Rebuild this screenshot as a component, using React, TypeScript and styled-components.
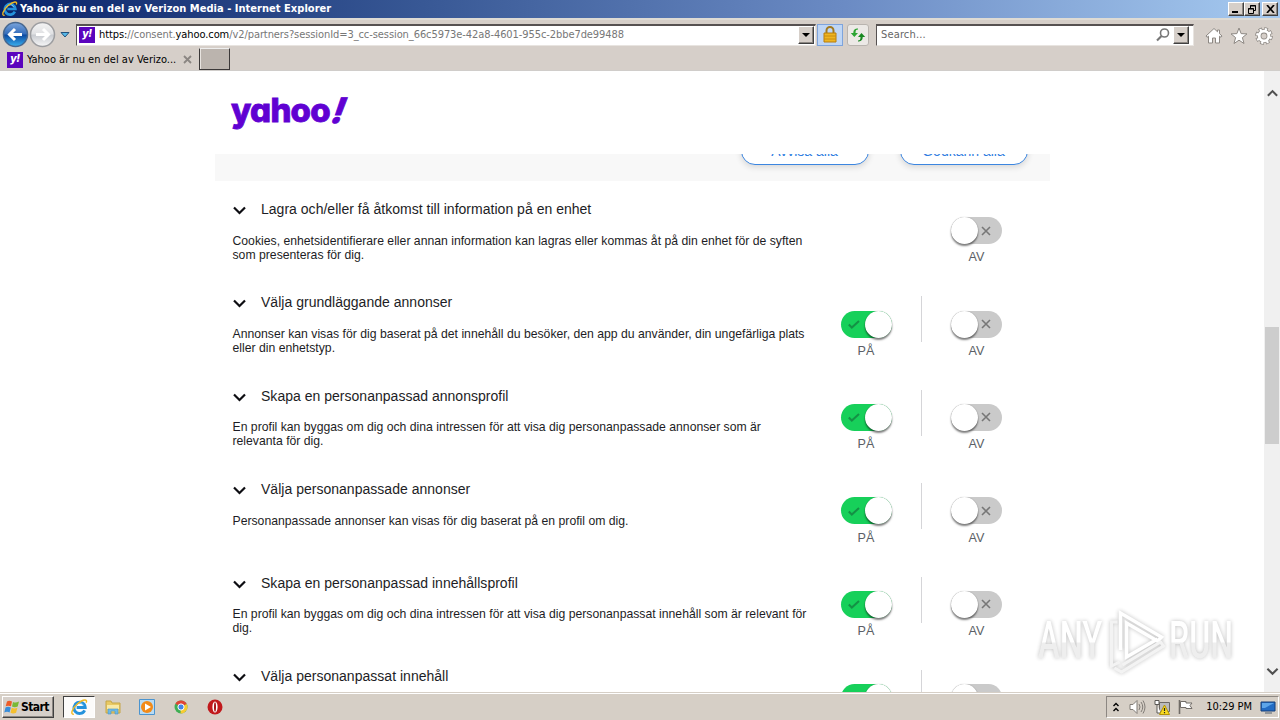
import React from "react";
import styled, { createGlobalStyle, css } from "styled-components";

const GlobalStyle = createGlobalStyle`
    * {
        box-sizing: border-box;
    }

    body {
        margin: 0;
        overflow: hidden;
        font-family: "Liberation Sans", Arial, sans-serif;
        background: #fff;
    }

    svg {
        display: block;
        flex: none;
    }
`;

const raised = css`
    background: #d6cfc9;
    border: 1px solid;
    border-color: #fff #404040 #404040 #fff;
    box-shadow: inset -1px -1px 0 #8c8782;
`;

const Desktop = styled.div`
    display: flex;
    flex-direction: column;
    width: 1280px;
    height: 720px;
    overflow: hidden;
`;

const TitleBar = styled.div`
    display: flex;
    align-items: center;
    height: 18px;
    padding: 0 2px;
    background: linear-gradient(90deg, #0a246a 0%, #385895 33%, #6b8bc4 66%, #a6caf0 100%);
`;

const UiText = styled.span<{ $size?: number; $spacing?: number; $bold?: boolean; $color?: string }>`
    font-family: "DejaVu Sans Condensed", "DejaVu Sans", sans-serif;
    font-stretch: condensed;
    font-size: ${(p) => p.$size || 11}px;
    font-weight: ${(p) => (p.$bold ? 700 : 400)};
    letter-spacing: ${(p) => p.$spacing || 0}px;
    color: ${(p) => p.$color || "#000"};
    line-height: 14px;
    white-space: nowrap;
`;

const TitleText = styled(UiText)`
    flex: 1;
    margin-left: 2px;
`;

const WindowButton = styled.div<{ $gap?: boolean }>`
    ${raised}
    display: flex;
    align-items: center;
    justify-content: center;
    width: 16px;
    height: 14px;
    margin-left: ${(p) => (p.$gap ? 2 : 0)}px;
`;

const AddressBar = styled.div`
    display: flex;
    align-items: center;
    height: 31px;
    padding: 0 0 0 2px;
    background: #d6cfc9;
    border-top: 2px solid #dedbd4;
`;

const Field = styled.div<{ $width: number }>`
    display: flex;
    align-items: center;
    flex: none;
    width: ${(p) => p.$width}px;
    height: 22px;
    padding: 0 1px 0 2px;
    background: #fff;
    border: 1px solid;
    border-color: #565151 #e8e4e0 #e8e4e0 #565151;
    border-top-width: 2px;
`;

const FieldText = styled(UiText)<{ $left?: number }>`
    flex: 1;
    margin-left: ${(p) => p.$left ?? 4}px;
`;

const DropButton = styled.div`
    ${raised}
    display: flex;
    align-items: center;
    justify-content: center;
    width: 16px;
    height: 18px;
`;

const ToolButton = styled.div<{ $active?: boolean; $left: number }>`
    display: flex;
    align-items: center;
    justify-content: center;
    width: ${(p) => (p.$active ? 26 : 22)}px;
    height: 22px;
    margin-left: ${(p) => p.$left}px;
    background: ${(p) => (p.$active ? "#bfd6f5" : "#ece9e6")};
    border: 1px solid ${(p) => (p.$active ? "#7ea4dc" : "#b9b4af")};
    border-radius: ${(p) => (p.$active ? 0 : 3)}px;
`;

const Commands = styled.div`
    display: flex;
    gap: 7px;
    margin: 2px 0 0 11px;
`;

const TabBar = styled.div`
    display: flex;
    height: 22px;
    background: #d6cfc9;
    border-bottom: 1px solid #d0cdca;
`;

const Tab = styled.div`
    display: flex;
    align-items: center;
    width: 199px;
    padding: 0 7px;
`;

const TabText = styled(UiText)`
    flex: 1;
    margin-left: 4px;
`;

const NewTab = styled.div`
    width: 31px;
    height: 22px;
    margin-top: -1px;
    background: #bbb4ae;
    border: 1px solid;
    border-color: #eee #3b3838 #3b3838 #3b3838;
    box-shadow: inset 1px 0 0 #e8e4e0;
`;

const Favicon = styled.div`
    display: flex;
    justify-content: center;
    flex: none;
    width: 16px;
    height: 16px;
    background: #5b04bd;
    color: #fff;
    font: italic 800 10.5px/14px "Inter", sans-serif;
    letter-spacing: -0.3px;
`;

const Viewport = styled.div`
    display: flex;
    height: 621px;
    overflow: hidden;
`;

const Page = styled.div`
    width: 1264px;
    height: 621px;
    overflow: hidden;
`;

const PageHeader = styled.header`
    display: flex;
    height: 83px;
    padding: 19px 0 0 231px;
`;

const Logo = styled.div`
    display: flex;
    font-family: "Inter", sans-serif;
    font-weight: 800;
    font-size: 33px;
    line-height: 40px;
    letter-spacing: -0.75px;
    font-feature-settings: "cv11";
    color: #6001d2;
    -webkit-text-stroke: 0.8px #6001d2;
`;

const LogoMark = styled.span`
    margin-left: -1px;
    font-size: 35px;
    font-weight: 800;
    transform: skewX(-20deg);
`;

const Scroller = styled.main`
    width: 835px;
    height: 538px;
    margin-left: 215px;
    overflow: hidden;
`;

const ActionBand = styled.div`
    display: flex;
    justify-content: flex-end;
    gap: 31px;
    height: 70px;
    margin-top: -43px;
    padding: 26px 22px 0 0;
    background: #f8f8f8;
`;

const PillButton = styled.button`
    width: 128px;
    height: 28px;
    padding: 0 1px 1px 0;
    font: 14px/16px "Liberation Sans", Arial, sans-serif;
    color: #2f7de1;
    background: #fff;
    border: 1px solid #3c86e0;
    border-radius: 14px;
    box-shadow: 0 2px 6px rgba(0, 0, 0, 0.14);
`;

const PurposeRow = styled.section`
    display: grid;
    grid-template-columns: 579px 110px 111px;
    height: 93.4px;
    padding-left: 17px;
`;

const PurposeText = styled.div`
    padding-top: 19px;
`;

const PurposeTitle = styled.h3`
    display: flex;
    align-items: center;
    gap: 14px;
    margin: 0;
    font-size: 14px;
    font-weight: 400;
    letter-spacing: 0.02px;
    line-height: 18px;
    color: #1d1d25;
    white-space: nowrap;

    svg {
        margin-top: 2px;
    }
`;

const PurposeDescription = styled.p`
    width: 582px;
    margin: 15.6px 0 0 0.5px;
    font-size: 12.22px;
    line-height: 14px;
    color: #1d1d25;
    white-space: pre;
`;

const ToggleCell = styled.div<{ $divided?: boolean }>`
    display: flex;
    flex-direction: column;
    align-items: center;
    height: 46px;
    margin-top: 22px;
    padding: 14.2px 1px 0 0;
    border-left: 1px solid ${(p) => (p.$divided ? "#d5d5d8" : "transparent")};
`;

const ToggleTrack = styled.div<{ $on: boolean }>`
    display: flex;
    flex: none;
    align-items: center;
    flex-direction: ${(p) => (p.$on ? "row-reverse" : "row")};
    width: 51px;
    height: 27px;
    background: ${(p) => (p.$on ? "#17d05a" : "#cacaca")};
    border-radius: 14px;
`;

const Knob = styled.div`
    width: 27px;
    height: 27px;
    background: #fff;
    border-radius: 50%;
    box-shadow: 0 2px 2px rgba(0, 0, 0, 0.5), 0 0 1px rgba(0, 0, 0, 0.3);
`;

const ToggleSymbol = styled.div<{ $on: boolean }>`
    display: flex;
    flex: 1;
    justify-content: ${(p) => (p.$on ? "center" : "flex-start")};
    padding-left: 2px;
`;

const ToggleLabel = styled.span`
    margin-top: 5.3px;
    font-size: 12.6px;
    line-height: 16px;
    color: #5b5f66;
`;

const ScrollBar = styled.div`
    display: flex;
    flex-direction: column;
    align-items: center;
    width: 16px;
    padding: 17px 0 16px;
    background: #f0f0f0;
`;

const ScrollThumb = styled.div`
    width: 14px;
    height: 117px;
    margin: 229px 0 auto;
    background: #cdcdcd;
`;

const Taskbar = styled.div`
    display: flex;
    align-items: center;
    height: 28px;
    padding: 2px 1px 1px 2px;
    background: #d6cfc6;
    border-top: 1px solid #d6cfc6;
    box-shadow: inset 0 1px 0 #fff;
`;

const StartButton = styled.div`
    ${raised}
    display: flex;
    align-items: center;
    gap: 1px;
    width: 52px;
    height: 22px;
    padding-left: 1px;
`;

const ActiveTask = styled.div`
    display: flex;
    align-items: center;
    justify-content: center;
    width: 32px;
    height: 22px;
    margin-left: 9px;
    background: #fcfbfa;
    border: 1px solid;
    border-color: #404040 #fff #fff #404040;
`;

const QuickLaunch = styled.div`
    display: flex;
    flex: 1;
    gap: 18px;
    padding-left: 10px;
`;

const Tray = styled.div`
    display: flex;
    align-items: center;
    width: 173px;
    height: 22px;
    padding-left: 5px;
    border: 1px solid;
    border-color: #8c8782 #fff #fff #8c8782;
`;

const TrayIcons = styled.div`
    display: flex;
    flex: 1;
    align-items: center;
    gap: 8px;
`;

const Watermark = styled.div`
    position: absolute;
    left: 1038px;
    top: 606px;
    display: flex;
    align-items: center;
    width: 196px;
    height: 70px;
    opacity: 0.85;
    filter: drop-shadow(0 0 2px rgba(0, 0, 0, 0.3));
`;

const WatermarkSlot = styled.div<{ $width: number }>`
    flex: none;
    width: ${(p) => p.$width}px;
`;

const WatermarkWord = styled.span<{ $scale: number }>`
    display: inline-block;
    font: 500 51px/60px "Roboto", Arial, sans-serif;
    color: transparent;
    background: linear-gradient(#fff 52%, #ececec 53%);
    background-clip: text;
    transform: scaleX(${(p) => p.$scale});
    transform-origin: 0 50%;
`;

const IeIcon = ({ size }: { size: number }) => (
    <svg width={size} height={size} viewBox="0 0 18 18" fill="none">
        <path d="M14.5 12a6 6 0 1 1 .6-3H6" stroke="#2492dc" strokeWidth="3" />
        <path d="M5 8c1-5 7-5 8-1" stroke="#8ad3fa" strokeWidth="1" />
        <path d="M3 16C-1 17 1 10 7 5s11-5 9-1" stroke="#f0b922" strokeWidth="1.5" />
    </svg>
);

const NavArrow = ({ back }: { back?: boolean }) => (
    <svg width="27" height="27" viewBox="0 0 27 27">
        <defs>
            <linearGradient id={back ? "navBack" : "navForward"} x2="0" y2="1">
                <stop stopColor={back ? "#7ba5dc" : "#f4f4f4"} />
                <stop offset=".48" stopColor={back ? "#356dbb" : "#e0e1e3"} />
                <stop offset=".52" stopColor={back ? "#0b49a1" : "#c8cbd0"} />
                <stop offset="1" stopColor={back ? "#3bb3f1" : "#f8f8f8"} />
            </linearGradient>
        </defs>
        <circle cx="13.5" cy="13.5" r="12" fill={`url(#${back ? "navBack" : "navForward"})`} stroke={back ? "#47678f" : "#9c9da0"} strokeWidth="1.5" />
        <path
            d={back ? "M20 13.5H8M13 8l-5.5 5.5L13 19" : "M7 13.5h12M14 8l5.5 5.5L14 19"}
            fill="none"
            stroke="#fff"
            strokeWidth="3"
        />
    </svg>
);

const DownTriangle = () => (
    <svg width="8" height="4" viewBox="0 0 8 4">
        <path d="M0 0h8L4 4z" fill="#000" />
    </svg>
);

const Chevron = ({ up, color = "#0d0d12", width = 14 }: { up?: boolean; color?: string; width?: number }) => (
    <svg width={width} height="10" viewBox="0 0 14 10">
        <path d={up ? "M2 8l5-5 5 5" : "M1.5 2.5L7 8l5.5-5.5"} fill="none" stroke={color} strokeWidth="2.2" />
    </svg>
);

const Toggle = ({ on }: { on: boolean }) => (
    <>
        <ToggleTrack $on={on}>
            <Knob />
            <ToggleSymbol $on={on}>
                <svg width="12" height="12" viewBox="0 0 12 12" fill="none" strokeWidth="1.6">
                    {on ? <path d="M.8 6.5l3 3L11 3" stroke="#149145" strokeWidth="2" /> : <path d="M2 2l8 8M10 2l-8 8" stroke="#777" />}
                </svg>
            </ToggleSymbol>
        </ToggleTrack>
        <ToggleLabel>{on ? "PÅ" : "AV"}</ToggleLabel>
    </>
);

const purposes = [
    {
        title: "Lagra och/eller få åtkomst till information på en enhet",
        text: "Cookies, enhetsidentifierare eller annan information kan lagras eller kommas åt på din enhet för de syften\nsom presenteras för dig.",
        single: true,
    },
    {
        title: "Välja grundläggande annonser",
        text: "Annonser kan visas för dig baserat på det innehåll du besöker, den app du använder, din ungefärliga plats\neller din enhetstyp.",
    },
    {
        title: "Skapa en personanpassad annonsprofil",
        text: "En profil kan byggas om dig och dina intressen för att visa dig personanpassade annonser som är\nrelevanta för dig.",
    },
    {
        title: "Välja personanpassade annonser",
        text: "Personanpassade annonser kan visas för dig baserat på en profil om dig.",
    },
    {
        title: "Skapa en personanpassad innehållsprofil",
        text: "En profil kan byggas om dig och dina intressen för att visa dig personanpassat innehåll som är relevant för\ndig.",
    },
];

const App = () => {
    return (
        <Desktop>
            <GlobalStyle />
            <TitleBar>
                <IeIcon size={16} />
                <TitleText $bold $color="#fff" $spacing={0.03}>Yahoo är nu en del av Verizon Media - Internet Explorer</TitleText>
                <WindowButton>
                    <svg width="10" height="9"><path d="M1 7h6" stroke="#000" strokeWidth="2" /></svg>
                </WindowButton>
                <WindowButton>
                    <svg width="10" height="9" fill="none" stroke="#000">
                        <path d="M3.5 3V.5h5v5H7M3 1h6M1 4h6" />
                        <path d="M1.5 3.5h5v5h-5z" />
                    </svg>
                </WindowButton>
                <WindowButton $gap>
                    <svg width="9" height="8"><path d="M1 0l7 8M8 0L1 8" stroke="#000" strokeWidth="1.7" /></svg>
                </WindowButton>
            </TitleBar>
            <AddressBar>
                <NavArrow back />
                <NavArrow />
                <svg width="20" height="8" viewBox="0 0 20 8">
                    <path d="M5 1.5h8L9 6z" fill="#55b8e8" stroke="#24527c" />
                </svg>
                <Field $width={740}>
                    <Favicon>y!</Favicon>
                    <FieldText $color="#777" $spacing={-0.08}>
                        <UiText $spacing={-0.08}>https:</UiText>//consent.<UiText $spacing={-0.08}>yahoo.com</UiText>
                        /v2/partners?sessionId=3_cc-session_66c5973e-42a8-4601-955c-2bbe7de99488
                    </FieldText>
                    <DropButton><DownTriangle /></DropButton>
                </Field>
                <ToolButton $active $left={1}>
                    <svg width="14" height="17" viewBox="0 0 14 17">
                        <path d="M3.5 8V4.5a3.5 3.5 0 0 1 7 0V8" fill="none" stroke="#a27a20" strokeWidth="2" />
                        <path d="M1 7h12v9H1z" fill="#efb51f" stroke="#b77c0c" />
                        <path d="M1 10h12M1 13h12" stroke="#c88c13" />
                    </svg>
                </ToolButton>
                <ToolButton $left={4}>
                    <svg width="16" height="16" viewBox="0 0 16 16">
                        <path d="M8 2.5C6 2.5 5.5 3.5 5.5 6H8L4.300 10 .8 6h2.500C3.500 2.500 5 1.500 8 1.500z" fill="#2da433" />
                        <path d="M8 14.500c2.500 0 4.700-1 4.700-4.500h2.500L11.500 6 8 10h2.500c0 2.500-.5 3.500-2.500 3.500z" fill="#178820" />
                    </svg>
                </ToolButton>
                <svg width="7" height="10" />
                <Field $width={318}>
                    <FieldText $color="#666" $spacing={0.15} $left={2}>Search...</FieldText>
                    <svg width="17" height="16" viewBox="0 0 17 16" fill="none" stroke="#777">
                        <circle cx="8.500" cy="6" r="4" strokeWidth="1.6" />
                        <path d="M5.500 9L1 13.500" strokeWidth="2.2" />
                    </svg>
                    <DropButton><DownTriangle /></DropButton>
                    <svg width="3" height="10" />
                </Field>
                <Commands>
                    <svg width="18" height="18" viewBox="0 0 18 18" fill="#fff" stroke="#8d8883">
                        <path d="M9 1.500L1 9l1 1.300 1.500-1.100V16h4v-5h3v5h4V9.200l1.500 1.100L17 9l-2.500-2.300V3h-2v1.800z" />
                    </svg>
                    <svg width="18" height="18" viewBox="0 0 18 18" fill="#fff" stroke="#8d8883">
                        <path d="M9 1l2.100 5.600 5.900.3-4.600 3.700L14 16.500l-5-3.300-5 3.300 1.600-5.900L1 6.900l5.900-.3z" />
                    </svg>
                    <svg width="18" height="18" viewBox="0 0 18 18" fill="none">
                        <circle cx="9" cy="9" r="7" stroke="#8d8883" strokeWidth="3.6" strokeDasharray="3.500 2" />
                        <circle cx="9" cy="9" r="4.800" stroke="#8d8883" strokeWidth="4.400" />
                        <circle cx="9" cy="9" r="6.800" stroke="#fff" strokeWidth="2.400" strokeDasharray="2.200 3.140" strokeDashoffset="-.6" />
                        <circle cx="9" cy="9" r="4.800" stroke="#fff" strokeWidth="2.800" />
                    </svg>
                </Commands>
            </AddressBar>
            <TabBar>
                <Tab>
                    <Favicon>y!</Favicon>
                    <TabText>Yahoo är nu en del av Verizo...</TabText>
                    <svg width="9" height="9"><path d="M1 1l7 7M8 1L1 8" stroke="#8b8682" strokeWidth="1.8" /></svg>
                </Tab>
                <NewTab />
            </TabBar>

            <Viewport>
                <Page>
                    <PageHeader>
                        <Logo>yahoo<LogoMark>!</LogoMark></Logo>
                    </PageHeader>
                    <Scroller>
                        <ActionBand>
                            <PillButton>Avvisa alla</PillButton>
                            <PillButton>Godkänn alla</PillButton>
                        </ActionBand>
                        {purposes.map((purpose) => (
                            <PurposeRow key={purpose.title}>
                                <PurposeText>
                                    <PurposeTitle>
                                        <Chevron width={15} />
                                        {purpose.title}
                                    </PurposeTitle>
                                    <PurposeDescription>{purpose.text}</PurposeDescription>
                                </PurposeText>
                                <ToggleCell>{!purpose.single && <Toggle on />}</ToggleCell>
                                <ToggleCell $divided={!purpose.single}><Toggle on={false} /></ToggleCell>
                            </PurposeRow>
                        ))}
                        <PurposeRow>
                            <PurposeText>
                                <PurposeTitle>
                                    <Chevron width={15} />
                                    Välja personanpassat innehåll
                                </PurposeTitle>
                            </PurposeText>
                            <ToggleCell><ToggleTrack $on><Knob /></ToggleTrack></ToggleCell>
                            <ToggleCell $divided><ToggleTrack $on={false}><Knob /></ToggleTrack></ToggleCell>
                        </PurposeRow>
                    </Scroller>
                </Page>
                <ScrollBar>
                    <Chevron up color="#505050" width={13} />
                    <ScrollThumb />
                    <Chevron color="#505050" width={13} />
                </ScrollBar>
            </Viewport>

            <Taskbar>
                <StartButton>
                    <svg width="16" height="16" viewBox="0 0 16 16">
                        <path d="M3 2.500q2-1.500 5 0L7 7.300q-3-1.300-5.300 0z" fill="#ed5c28" />
                        <path d="M9 3q2.500 1.300 6-.5l-1.300 5q-3 1.500-5.700 0z" fill="#79b936" />
                        <path d="M1.500 8.500q2.500-1.300 5.300 0l-1.200 5q-2.500-1.500-5.300 0z" fill="#388dda" />
                        <path d="M7.700 8.800q2.700 1.400 5.700 0l-1.300 5q-3 1.300-5.600 0z" fill="#f5bf2e" />
                    </svg>
                    <UiText $bold $size={12} $spacing={-0.6}>Start</UiText>
                </StartButton>
                <ActiveTask><IeIcon size={17} /></ActiveTask>
                <QuickLaunch>
                    <svg width="16" height="16" viewBox="0 0 16 16">
                        <path d="M1 2h5l1 2h8v10H1z" fill="#e8c964" stroke="#c5a646" />
                        <path d="M2 6h12v4H2z" fill="#f8e9a6" />
                        <path d="M3 15v-5h10v5h-3v-3H6v3z" fill="#6eb9e5" stroke="#4894c6" strokeWidth=".6" />
                    </svg>
                    <svg width="16" height="16" viewBox="0 0 16 16">
                        <path d="M.5.5h15v15H.5z" fill="#b9dbf3" stroke="#4b94cf" />
                        <circle cx="8" cy="8" r="6" fill="#f28a18" />
                        <path d="M6 4.500L12 8l-6 3.500z" fill="#fff" />
                    </svg>
                    <svg width="16" height="16" viewBox="0 0 16 16">
                        <circle cx="8" cy="8" r="6.500" fill="#3fae53" />
                        <path d="M8 8L2.400 4.700A6.500 6.500 0 0 1 13.700 5z" fill="#e04435" />
                        <path d="M8 8l5.700-3A6.500 6.500 0 0 1 7.500 14.500z" fill="#f8cb31" />
                        <circle cx="8" cy="8" r="3.100" fill="#4285e8" stroke="#fff" />
                    </svg>
                    <svg width="16" height="16" viewBox="0 0 16 16">
                        <circle cx="8" cy="8" r="7.500" fill="#c1191c" />
                        <ellipse cx="8" cy="8" rx="2.600" ry="5.500" fill="#fff" />
                        <ellipse cx="8" cy="8" rx="1" ry="4.700" fill="#a61417" />
                    </svg>
                </QuickLaunch>
                <Tray>
                    <TrayIcons>
                        <svg width="9" height="11" fill="none" stroke="#000" strokeWidth="1.4">
                            <path d="M1.500 4L4 1.500 6.500 4M1.500 9L4 6.500 6.500 9" />
                        </svg>
                        <svg width="17" height="16" viewBox="0 0 17 16" fill="#fff" stroke="#817c77">
                            <path d="M1 5.500h3l4-4v13l-4-4H1z" />
                            <path d="M10 5q2 3 0 6M12 3q3.500 5 0 10M14 1.500q4 6.500 0 13" fill="none" />
                        </svg>
                        <svg width="16" height="16" viewBox="0 0 16 16">
                            <path d="M5.500 3.500h10v9h-10z" fill="#bbb" stroke="#6d6964" />
                            <path d="M1 1.500h4v4H1zM3 6v8h4" fill="#fff" stroke="#5b5854" />
                            <path d="M10.500 6l5 9.500h-10z" fill="#f9db21" stroke="#b39305" />
                            <path d="M10.500 9v3M10.500 13v1.200" stroke="#222" strokeWidth="1.2" />
                        </svg>
                        <svg width="17" height="16" viewBox="0 0 17 16" fill="#fff" stroke="#716c67">
                            <path d="M1.500 1v14" strokeWidth="1.6" />
                            <path d="M2.500 2.500h5.500v1.500h6l-2 2.500 2 3H8V8.500H2.500z" />
                        </svg>
                    </TrayIcons>
                    <UiText $spacing={-0.05}>10:29 PM</UiText>
                    <svg width="26" height="16" viewBox="0 0 26 16">
                        <path d="M9 3h14v9H9z" fill="#236cc4" stroke="#173f79" />
                        <path d="M10 4h12l-9 5h-3z" fill="#5da5e9" />
                        <path d="M13 14h7" stroke="#52606e" />
                    </svg>
                </Tray>
            </Taskbar>

            <Watermark>
                <WatermarkSlot $width={68}>
                    <WatermarkWord $scale={0.64}>ANY</WatermarkWord>
                </WatermarkSlot>
                <svg width="63" height="66" viewBox="0 0 62 66" fill="none" stroke="#fff">
                    <path d="M14 42V5l41 24-4 4-31-18v34l31-18" strokeWidth="3.5" />
                    <path d="M11 14H5v44l8-4M8 60l7 4 42-26-3-4-38 23" stroke="#f2f2f2" strokeWidth="3" />
                </svg>
                <WatermarkSlot $width={64}>
                    <WatermarkWord $scale={0.63}>RUN</WatermarkWord>
                </WatermarkSlot>
            </Watermark>
        </Desktop>
    );
};

export default App;
